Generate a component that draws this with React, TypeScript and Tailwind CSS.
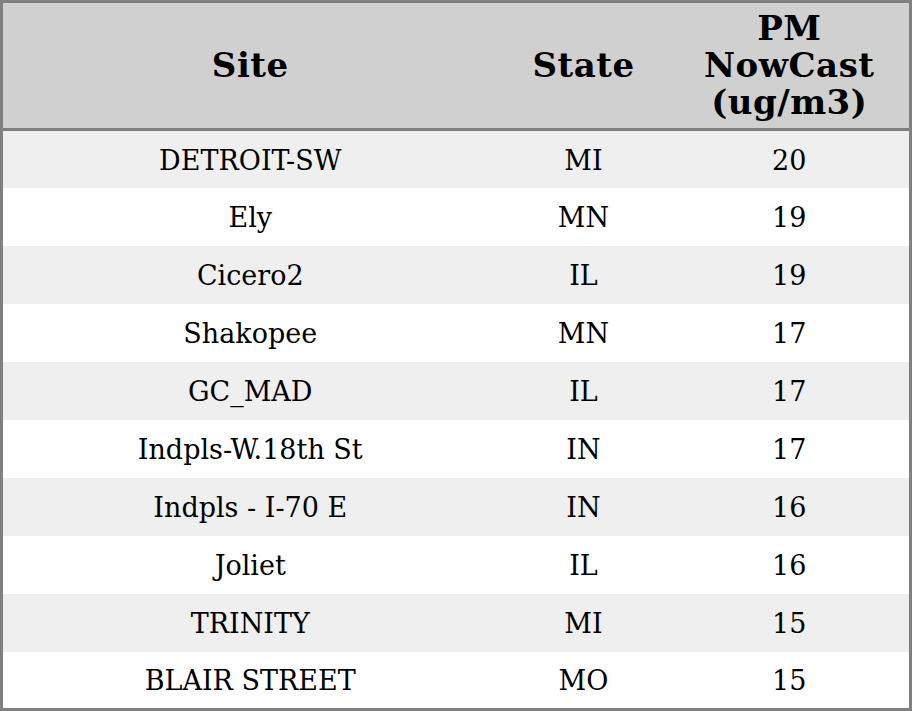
const rows: [string, string, number][] = [
  ['DETROIT-SW', 'MI', 20],
  ['Ely', 'MN', 19],
  ['Cicero2', 'IL', 19],
  ['Shakopee', 'MN', 17],
  ['GC_MAD', 'IL', 17],
  ['Indpls-W.18th St', 'IN', 17],
  ['Indpls - I-70 E', 'IN', 16],
  ['Joliet', 'IL', 16],
  ['TRINITY', 'MI', 15],
  ['BLAIR STREET', 'MO', 15],
];

export default function App() {
  return (
    <div className="w-[912px] h-[711px] bg-white font-['DejaVu_Serif',serif] text-black">
      <table className="w-full h-full border-[3px] border-[#808080] border-collapse table-fixed">
        <colgroup>
          <col className="w-[496px]" />
          <col className="w-[172px]" />
          <col />
        </colgroup>
        <thead>
          <tr className="bg-[#d0d0d0] h-[128px] border-b-[3px] border-[#808080]">
            <th className="text-[34px] leading-[37px] tracking-[0.5px] font-bold text-center">Site</th>
            <th className="text-[34px] leading-[37px] tracking-[0.5px] font-bold text-center">State</th>
            <th className="text-[34px] leading-[37px] tracking-[0.5px] font-bold text-center">
              PM
              <br />
              NowCast
              <br />
              (ug/m3)
            </th>
          </tr>
        </thead>
        <tbody>
          {rows.map(([site, state, value], i) => (
            <tr key={site} className={i % 2 === 0 ? 'bg-[#efefef] h-[58px]' : 'bg-white h-[58px]'}>
              <td className="text-[27px] pt-[3px] text-center">{site}</td>
              <td className="text-[27px] pt-[3px] text-center">{state}</td>
              <td className="text-[27px] pt-[3px] text-center">{value}</td>
            </tr>
          ))}
        </tbody>
      </table>
    </div>
  );
}
